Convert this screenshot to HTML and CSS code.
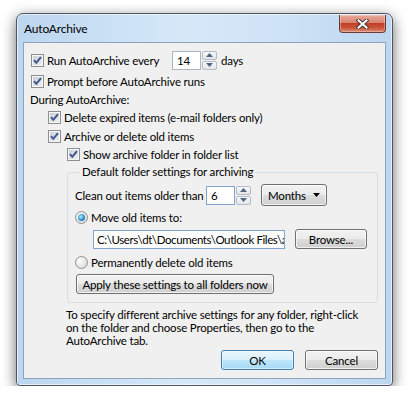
FILE: index.html
```html
<!DOCTYPE html>
<html lang="en">
  <head>
    <meta charset="UTF-8" />
    <meta name="viewport" content="width=device-width, initial-scale=1.0" />
    <title>AutoArchive</title>
    <link rel="stylesheet" href="styles.css">
  </head>
  <body>
    <div class="window">
      <div class="titlebar">
        <span class="title">AutoArchive</span>
        <span class="close">
          <svg width="13" height="10" viewBox="0 0 13 10">
            <path d="M2.5 1.5l8 7M10.5 1.5l-8 7" stroke="#4a3a38" stroke-width="4" stroke-linecap="square" />
            <path d="M2.5 1.5l8 7M10.5 1.5l-8 7" stroke="#fff" stroke-width="2" stroke-linecap="square" />
          </svg>
        </span>
      </div>

      <div class="client">
        <div class="row r-run">
          <label class="check w-run">
            <span class="box"><svg width="11" height="11" viewBox="0 0 11 11"><path d="M2 5.2l2.3 2.6L9 2.2" stroke="#3f5590" stroke-width="2" fill="none" /></svg></span>
            Run AutoArchive every
          </label>
          <span class="edit w-num">14</span>
          <span class="spin">
            <span><svg width="7" height="4" viewBox="0 0 7 4"><path d="M0 4h7L3.5 0z" fill="#4e6483" /></svg></span>
            <span><svg width="7" height="4" viewBox="0 0 7 4"><path d="M0 0h7L3.5 4z" fill="#4e6483" /></svg></span>
          </span>
          <span class="unit">days</span>
        </div>

        <div class="row r-prompt">
          <label class="check">
            <span class="box"><svg width="11" height="11" viewBox="0 0 11 11"><path d="M2 5.2l2.3 2.6L9 2.2" stroke="#3f5590" stroke-width="2" fill="none" /></svg></span>
            Prompt before AutoArchive runs
          </label>
        </div>

        <div class="row r-during">During AutoArchive:</div>

        <div class="row r-delete indent1">
          <label class="check">
            <span class="box"><svg width="11" height="11" viewBox="0 0 11 11"><path d="M2 5.2l2.3 2.6L9 2.2" stroke="#3f5590" stroke-width="2" fill="none" /></svg></span>
            Delete expired items (e-mail folders only)
          </label>
        </div>

        <div class="row r-archive indent1">
          <label class="check">
            <span class="box"><svg width="11" height="11" viewBox="0 0 11 11"><path d="M2 5.2l2.3 2.6L9 2.2" stroke="#3f5590" stroke-width="2" fill="none" /></svg></span>
            Archive or delete old items
          </label>
        </div>

        <div class="row r-show indent2">
          <label class="check">
            <span class="box"><svg width="11" height="11" viewBox="0 0 11 11"><path d="M2 5.2l2.3 2.6L9 2.2" stroke="#3f5590" stroke-width="2" fill="none" /></svg></span>
            Show archive folder in folder list
          </label>
        </div>

        <fieldset class="group">
          <legend>Default folder settings for archiving</legend>

          <div class="row r-clean">
            <span class="w-clean">Clean out items older than</span>
            <span class="edit w-num sel">6</span>
            <span class="spin">
              <span><svg width="7" height="4" viewBox="0 0 7 4"><path d="M0 4h7L3.5 0z" fill="#4e6483" /></svg></span>
              <span><svg width="7" height="4" viewBox="0 0 7 4"><path d="M0 0h7L3.5 4z" fill="#4e6483" /></svg></span>
            </span>
            <span class="combo">
              Months
              <svg width="7" height="4" viewBox="0 0 7 4"><path d="M0 0h7L3.5 4z" fill="#000" /></svg>
            </span>
          </div>

          <div class="row r-move">
            <label class="check"><span class="radio on"></span>Move old items to:</label>
          </div>

          <div class="row r-path">
            <span class="edit path sel">C:\Users\dt\Documents\Outlook Files\a</span>
            <button class="btn w-browse">Browse...</button>
          </div>

          <div class="row r-perm">
            <label class="check"><span class="radio"></span>Permanently delete old items</label>
          </div>

          <div class="row r-apply">
            <button class="btn w-apply">Apply these settings to all folders now</button>
          </div>
        </fieldset>

        <p class="hint">
          To specify different archive settings for any folder, right-click<br />
          on the folder and choose Properties, then go to the<br />
          AutoArchive tab.
        </p>

        <div class="actions">
          <button class="btn default">OK</button>
          <button class="btn">Cancel</button>
        </div>
      </div>
    </div>
  </body>
</html>
```

FILE: styles.css
```css
* {
  margin: 0;
  padding: 0;
  box-sizing: border-box;
}

body {
  background: #fff;
  font-family: Lato, "Liberation Sans", sans-serif;
  font-size: 11.5px;
  letter-spacing: -0.18px;
  color: #000;
}

/* window frame */
.window {
  width: 377px;
  height: 373px;
  margin: 13px 0 0 16px;
  padding: 0 6px 6px;
  display: flex;
  flex-direction: column;
  border: 1px solid #4f5661;
  border-radius: 7px 7px 4px 4px;
  background: linear-gradient(to right, #bcd6ef, #d6e9f9 45%, #cfe3f6 70%, #bcd6ef);
  box-shadow: inset 0 0 0 1px rgba(255, 255, 255, 0.6), 0 4px 14px rgba(0, 0, 0, 0.6);
}

.titlebar {
  height: 28px;
  flex: none;
  display: flex;
  justify-content: space-between;
  align-items: flex-start;
}

.title {
  margin: 7px 0 0 1px;
  line-height: 15px;
  font-size: 12px;
}

.close {
  width: 47px;
  height: 18px;
  margin-top: 1px;
  display: flex;
  align-items: center;
  justify-content: center;
  border: 1px solid #6e3b33;
  border-top: none;
  border-radius: 0 0 4px 4px;
  background: linear-gradient(#e9a99a, #d98472 45%, #c23f27 50%, #c9543a 75%, #de8d73);
  box-shadow: inset 0 0 0 1px rgba(255, 255, 255, 0.3);
}

.client {
  flex: 1;
  display: flex;
  flex-direction: column;
  padding: 7px 7px 8px;
  border: 1px solid #8ea3bc;
  background: #f0f0f0;
}

.client > * {
  flex-shrink: 0;
}

/* rows */
.row {
  display: flex;
  align-items: center;
  height: 18px;
  white-space: nowrap;
}

.r-run { height: 20px; }
.r-prompt { margin-top: 2px; }
.r-archive { margin-top: 1px; }
.r-clean { height: 22px; }
.r-move { margin-top: 2px; }
.r-path { height: 20px; margin-top: 3px; }
.r-perm { margin-top: 4px; }
.r-apply { height: 20px; margin-top: 3px; }

.indent1 { margin-left: 17px; }
.indent2 { margin-left: 36px; }
.r-during { margin-left: -1px; }

.check {
  display: flex;
  align-items: center;
}

.w-run { width: 141px; }
.w-clean { width: 131px; }

.box {
  width: 13px;
  height: 13px;
  margin-right: 3px;
  flex: none;
  border: 1px solid #8e8f8f;
  background: linear-gradient(135deg, #c9cfd6, #eef0f2);
  box-shadow: inset 0 0 0 1px #f6f6f6;
}

.box svg {
  display: block;
}

.radio {
  width: 13px;
  height: 13px;
  margin-right: 3px;
  flex: none;
  display: flex;
  align-items: center;
  justify-content: center;
  border: 1px solid #8e8f8f;
  border-radius: 50%;
  background: radial-gradient(circle at 35% 35%, #fdfdfd, #d4d4d4);
}

.radio.on::after {
  content: "";
  width: 7px;
  height: 7px;
  border-radius: 50%;
  background: radial-gradient(circle at 40% 40%, #b9efff, #2d93d6 55%, #15467f);
}

/* edit fields and spinners */
.edit {
  height: 19px;
  padding: 0 4px;
  line-height: 17px;
  border: 1px solid #a9b6c6;
  background: #fff;
  overflow: hidden;
}

.edit.sel {
  border-color: #7ea4cf;
}

.w-num { width: 29px; }

.spin {
  width: 15px;
  height: 19px;
  margin-left: 1px;
  display: flex;
  flex-direction: column;
  gap: 1px;
}

.spin span {
  flex: 1;
  display: flex;
  align-items: center;
  justify-content: center;
  border: 1px solid #b3bcc7;
  border-radius: 2px;
  background: linear-gradient(#f8f8f8, #e2e4e7);
}

.unit { margin-left: 4px; }

.combo {
  width: 66px;
  height: 22px;
  margin-left: 10px;
  padding: 0 6px;
  display: flex;
  align-items: center;
  justify-content: space-between;
  border: 1px solid #707070;
  border-radius: 3px;
  background: linear-gradient(#f2f2f2, #ebebeb 50%, #dddddd 51%, #cfcfcf);
  box-shadow: inset 0 0 0 1px rgba(255, 255, 255, 0.7);
}

/* group box */
.group {
  margin: 2px 0 0 36px;
  padding: 5px 7px 8px;
  border: 1px solid #d5dfe5;
  border-radius: 3px;
}

.group legend {
  margin-left: 5px;
  padding: 0 2px;
  line-height: 14px;
}

.path {
  width: 192px;
  margin-left: 18px;
  padding: 0 0 0 3px;
  letter-spacing: -0.4px;
  white-space: nowrap;
}

/* buttons */
.btn {
  height: 20px;
  width: 73px;
  font: inherit;
  letter-spacing: inherit;
  color: inherit;
  border: 1px solid #707070;
  border-radius: 3px;
  background: linear-gradient(#f2f2f2, #ebebeb 50%, #dddddd 51%, #cfcfcf);
  box-shadow: inset 0 0 0 1px rgba(255, 255, 255, 0.7);
}

.btn.default {
  border-color: #3c7fb1;
  background: linear-gradient(#eaf6fd, #d9f0fc 50%, #bee6fd 51%, #a7d9f5);
  box-shadow: inset 0 0 0 1px rgba(255, 255, 255, 0.5);
}

.w-browse { width: 72px; margin-left: 10px; }
.w-apply { width: 198px; margin-left: 1px; }

.hint {
  margin: 5px 0 0 35px;
  line-height: 13px;
  white-space: nowrap;
}

.actions {
  margin-top: auto;
  display: flex;
  justify-content: flex-end;
  gap: 11px;
}
```
